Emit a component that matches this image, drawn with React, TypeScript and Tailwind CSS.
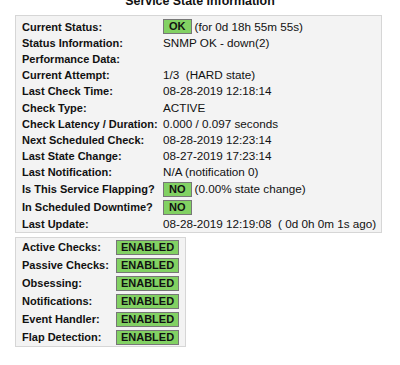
const font = "font-['Liberation_Sans',Arial,sans-serif]"

type Row = { label: string; h: string; value?: string; badge?: string; after?: string }

const stateRows: Row[] = [
  { label: "Current Status:", h: "h-[17px]", badge: "OK", after: "(for 0d 18h 55m 55s)" },
  { label: "Status Information:", h: "h-[16px]", value: "SNMP OK - down(2)" },
  { label: "Performance Data:", h: "h-[16px]", value: "" },
  { label: "Current Attempt:", h: "h-[16px]", value: "1/3  (HARD state)" },
  { label: "Last Check Time:", h: "h-[16px]", value: "08-28-2019 12:18:14" },
  { label: "Check Type:", h: "h-[17px]", value: "ACTIVE" },
  { label: "Check Latency / Duration:", h: "h-[16px]", value: "0.000 / 0.097 seconds" },
  { label: "Next Scheduled Check:", h: "h-[16px]", value: "08-28-2019 12:23:14" },
  { label: "Last State Change:", h: "h-[16px]", value: "08-27-2019 17:23:14" },
  { label: "Last Notification:", h: "h-[16px]", value: "N/A (notification 0)" },
  { label: "Is This Service Flapping?", h: "h-[18px]", badge: "NO", after: "(0.00% state change)" },
  { label: "In Scheduled Downtime?", h: "h-[18px]", badge: "NO" },
  { label: "Last Update:", h: "h-[15px]", value: "08-28-2019 12:19:08  ( 0d 0h 0m 1s ago)" },
]

const checks = [
  "Active Checks:",
  "Passive Checks:",
  "Obsessing:",
  "Notifications:",
  "Event Handler:",
  "Flap Detection:",
]

function Badge({ text, wide }: { text: string; wide?: boolean }) {
  return (
    <span
      className={`flex h-[15px] items-center justify-center border border-[#777] bg-[#82d163] px-[5px] text-[11px] font-bold leading-[13px] text-[#111] ${
        wide ? "w-[63px]" : ""
      }`}
    >
      {text}
    </span>
  )
}

export default function App() {
  return (
    <div className={`h-[365px] w-[400px] overflow-hidden bg-white text-[#111] ${font}`}>
      <div className="-mt-[6px] h-[14px] text-center text-[12.4px] font-bold leading-[14px]">
        Service State Information
      </div>

      {/* state info */}
      <div className="ml-[15px] mt-[7px] w-[367px] border border-[#d6d6d6] bg-[#f3f3f3] pl-[6px] pt-[2px] pb-[1px]">
        {stateRows.map((r) => (
          <div key={r.label} className={`flex items-center ${r.h}`}>
            <div className="w-[141px] shrink-0 text-[11px] font-bold leading-[14px]">{r.label}</div>
            {r.badge ? (
              <div className="flex items-center">
                <Badge text={r.badge} />
                {r.after && (
                  <span className="ml-[3px] text-[11.7px] leading-[14px]">{r.after}</span>
                )}
              </div>
            ) : (
              <div className="whitespace-pre text-[11.7px] leading-[14px]">{r.value}</div>
            )}
          </div>
        ))}
      </div>

      {/* check states */}
      <div className="ml-[15px] mt-[4px] w-[171px] border border-[#d6d6d6] bg-[#f3f3f3] pl-[6px]">
        {checks.map((c) => (
          <div key={c} className="flex h-[18px] items-center">
            <div className="w-[94px] shrink-0 text-[11px] font-bold leading-[14px]">{c}</div>
            <Badge text="ENABLED" wide />
          </div>
        ))}
      </div>
    </div>
  )
}
